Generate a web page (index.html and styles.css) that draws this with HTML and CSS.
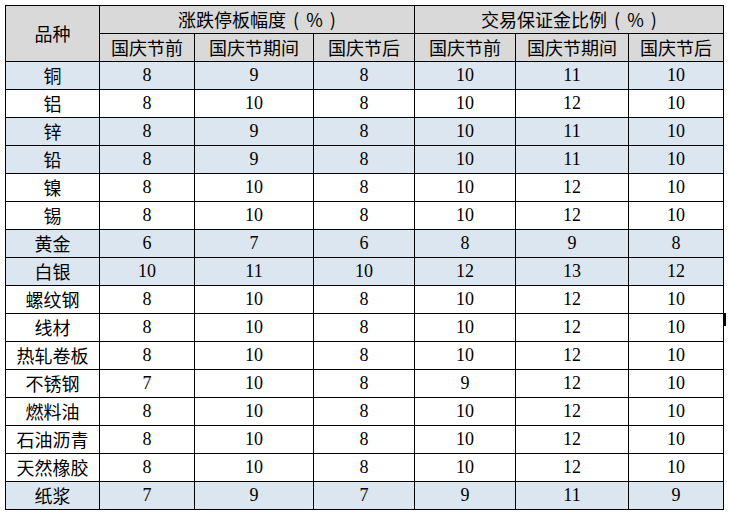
FILE: index.html
```html
<!DOCTYPE html>
<html lang="zh-CN">
<head>
<meta charset="utf-8">
<title>涨跌停板幅度与交易保证金比例</title>
<link rel="stylesheet" href="styles.css">
</head>
<body>
<div class="wrap">
<table class="grid">
  <colgroup>
    <col class="c1"><col class="c2"><col class="c3"><col class="c4"><col class="c5"><col class="c6"><col class="c7">
  </colgroup>
  <thead>
    <tr>
      <th rowspan="2">品种</th>
      <th colspan="3">涨跌停板幅度<span class="unit">( % )</span></th>
      <th colspan="3">交易保证金比例<span class="unit">( % )</span></th>
    </tr>
    <tr>
      <th>国庆节前</th><th>国庆节期间</th><th>国庆节后</th>
      <th>国庆节前</th><th>国庆节期间</th><th>国庆节后</th>
    </tr>
  </thead>
  <tbody>
    <tr class="hl"><td>铜</td><td>8</td><td>9</td><td>8</td><td>10</td><td>11</td><td>10</td></tr>
    <tr><td>铝</td><td>8</td><td>10</td><td>8</td><td>10</td><td>12</td><td>10</td></tr>
    <tr class="hl"><td>锌</td><td>8</td><td>9</td><td>8</td><td>10</td><td>11</td><td>10</td></tr>
    <tr class="hl"><td>铅</td><td>8</td><td>9</td><td>8</td><td>10</td><td>11</td><td>10</td></tr>
    <tr><td>镍</td><td>8</td><td>10</td><td>8</td><td>10</td><td>12</td><td>10</td></tr>
    <tr><td>锡</td><td>8</td><td>10</td><td>8</td><td>10</td><td>12</td><td>10</td></tr>
    <tr class="hl"><td>黄金</td><td>6</td><td>7</td><td>6</td><td>8</td><td>9</td><td>8</td></tr>
    <tr class="hl"><td>白银</td><td>10</td><td>11</td><td>10</td><td>12</td><td>13</td><td>12</td></tr>
    <tr><td>螺纹钢</td><td>8</td><td>10</td><td>8</td><td>10</td><td>12</td><td>10</td></tr>
    <tr><td>线材</td><td>8</td><td>10</td><td>8</td><td>10</td><td>12</td><td>10</td></tr>
    <tr><td>热轧卷板</td><td>8</td><td>10</td><td>8</td><td>10</td><td>12</td><td>10</td></tr>
    <tr><td>不锈钢</td><td>7</td><td>10</td><td>8</td><td>9</td><td>12</td><td>10</td></tr>
    <tr><td>燃料油</td><td>8</td><td>10</td><td>8</td><td>10</td><td>12</td><td>10</td></tr>
    <tr><td>石油沥青</td><td>8</td><td>10</td><td>8</td><td>10</td><td>12</td><td>10</td></tr>
    <tr><td>天然橡胶</td><td>8</td><td>10</td><td>8</td><td>10</td><td>12</td><td>10</td></tr>
    <tr class="hl"><td>纸浆</td><td>7</td><td>9</td><td>7</td><td>9</td><td>11</td><td>9</td></tr>
  </tbody>
</table>
<div class="mark"></div>
</div>
</body>
</html>
```

FILE: styles.css
```css
html, body {
  margin: 0;
  padding: 0;
  background: #ffffff;
}
.wrap {
  position: relative;
  padding: 5px 0 0 5px;
  width: 729px;
  height: 515px;
  box-sizing: border-box;
}
.grid {
  border-collapse: separate;
  border-spacing: 0;
  table-layout: fixed;
  width: 719px;
  border-left: 1px solid #000;
  border-top: 1px solid #000;
  font-family: "Liberation Serif", "Noto Sans CJK SC", serif;
  font-size: 18px;
  color: #000;
}
.c1 { width: 94px; }
.c2 { width: 95px; }
.c3 { width: 119px; }
.c4 { width: 101px; }
.c5 { width: 101px; }
.c6 { width: 113px; }
.c7 { width: 95px; }
.grid th,
.grid td {
  box-sizing: border-box;
  height: 28px;
  padding: 0;
  border-right: 1px solid #000;
  border-bottom: 1px solid #000;
  text-align: center;
  vertical-align: middle;
  line-height: 27px;
  font-weight: normal;
  white-space: nowrap;
  overflow: hidden;
}
.grid th {
  background: #d9d9d9;
  font-family: "Noto Sans CJK SC", sans-serif;
}
.unit {
  margin-left: 7px;
  word-spacing: 3px;
}
.grid td:first-child {
  font-family: "Noto Sans CJK SC", sans-serif;
}
.grid tr.hl td {
  background: #dce6f1;
}
.mark {
  position: absolute;
  left: 723px;
  top: 313px;
  width: 3px;
  height: 13px;
  background: #000;
}
```
